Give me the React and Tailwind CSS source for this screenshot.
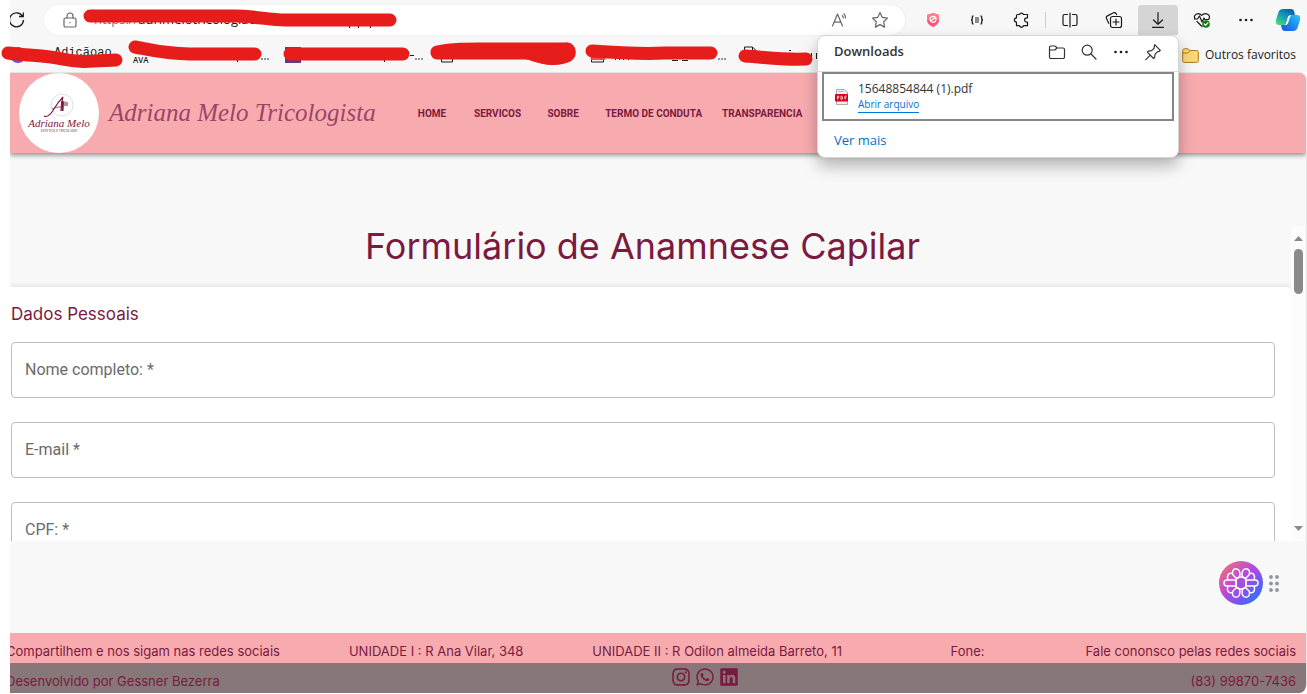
import React from 'react';
import { FaInstagram, FaWhatsapp, FaLinkedin } from 'react-icons/fa';

const NAV = ['HOME', 'SERVICOS', 'SOBRE', 'TERMO DE CONDUTA', 'TRANSPARENCIA'];
const FIELDS = [
  { id: 'nome', label: 'Nome completo: *', type: 'text' },
  { id: 'email', label: 'E-mail *', type: 'email' },
  { id: 'cpf', label: 'CPF: *', type: 'text' },
];

function Icon({ size = 18, view = '0 0 18 18', children, color = '#1b1b1b' }) {
  return (
    <svg width={size} height={size} viewBox={view} fill="none" stroke={color} strokeWidth="1.2" strokeLinecap="round" strokeLinejoin="round" aria-hidden="true">
      {children}
    </svg>
  );
}

function Dots() {
  return (
    <Icon>
      <g fill="#1b1b1b" stroke="none">
        <circle cx="3.5" cy="9" r="1.3" />
        <circle cx="9" cy="9" r="1.3" />
        <circle cx="14.5" cy="9" r="1.3" />
      </g>
    </Icon>
  );
}

function ToolButton({ label, children }) {
  return (
    <button type="button" aria-label={label} className="flex h-[30px] w-11 shrink-0 items-center justify-center">
      {children}
    </button>
  );
}

function DownloadsPanel() {
  return (
    <section aria-label="Downloads" className="absolute top-full -right-px z-20 w-[362px] rounded-lg border border-[#d5d5d5] bg-white shadow-[0_8px_16px_rgba(0,0,0,0.28)]">
      <header className="flex h-9 items-center border-b border-[#dcdcdc] px-4 pb-1">
        <h2 className="flex-1 text-[13px] font-semibold text-[#333]">Downloads</h2>
        <div className="flex items-center gap-3.5">
          <button type="button" aria-label="Abrir pasta">
            <Icon color="#333">
              <path d="M1.5 14V4.5A1.5 1.5 0 0 1 3 3h3.6c.5 0 .8.2 1.1.5L9 5h6a1.5 1.5 0 0 1 1.5 1.5V14a1.5 1.5 0 0 1-1.5 1.500H3A1.500 1.500 0 0 1 1.500 14ZM1.500 7h4.800c.500 0 .8-.2 1.100-.5L9 5" />
            </Icon>
          </button>
          <button type="button" aria-label="Pesquisar downloads">
            <Icon color="#333">
              <circle cx="7.200" cy="7.200" r="5" />
              <path d="m11 11 5 5" />
            </Icon>
          </button>
          <button type="button" aria-label="Mais opções"><Dots /></button>
          <button type="button" aria-label="Fixar">
            <Icon color="#333">
              <path d="m10.700 1.700 5.600 5.600-1.300 1.200-1.300.1-2.600 2.600-.5 3.300-1 1L3.300 9.200l1-1 3.300-.5 2.600-2.600.1-2.200ZM6.300 12.200l-4.500 4.500" />
            </Icon>
          </button>
        </div>
      </header>
      <div className="mx-1 flex h-[49px] items-center gap-2 border-2 border-[#868686] pl-2.5">
        <svg width="16" height="18" viewBox="0 0 16 18" aria-hidden="true">
          <path d="M2.500 1.500h8L13.500 4v12.500h-11Z" fill="#eee" stroke="#aaa" />
          <path d="M4 3.500h6" stroke="#bbb" />
          <rect x="1" y="6" width="13" height="7.500" rx="1" fill="#d9001b" />
          <path d="M3.500 11.500V8.200h1.200v1.700H3.500M7 11.500V8.200h.8c1 0 1 3.300 0 3.300ZM11 11.500V8.200h1.600M11 9.800h1.300" fill="none" stroke="#fff" strokeWidth=".8" />
        </svg>
        <div className="flex flex-col items-start">
          <span className="text-[12px] leading-4 text-[#333]">15648854844 (1).pdf</span>
          <a href="#abrir" className="border-b border-[#0078d4] text-[10px] leading-[15px] text-[#0072c9]">Abrir arquivo</a>
        </div>
      </div>
      <a href="#mais" className="block px-4 pt-0.5 text-[13px] leading-[34px] text-[#0072c9]">Ver mais</a>
    </section>
  );
}

function Toolbar() {
  return (
    <div className="flex h-[38px] items-center pt-[3px] pb-px">
      <button type="button" aria-label="Atualizar" className="flex h-[30px] w-[34px] shrink-0 items-center overflow-hidden">
        <svg width="17" height="20" viewBox="0 0 17 20" fill="none" stroke="#1b1b1b" strokeWidth="1.300" className="-ml-0.5" aria-hidden="true">
          <path d="M14.500 6.200A7 7 0 1 0 15.500 10M15.300 2.500v4h-4.300" />
        </svg>
      </button>
      <div className="flex h-[30px] min-w-0 flex-1 items-center rounded-full bg-white pr-4 pl-[18px] shadow-[0_0_2px_rgba(0,0,0,0.08)]">
        <Icon size={16} view="0 0 16 16" color="#666">
          <rect x="2" y="6" width="12" height="9" rx="1.500" />
          <path d="M5 6V4a3 3 0 0 1 6 0v2M8 10.300v.4" />
        </Icon>
        <p className="min-w-0 flex-1 truncate pl-4 text-[13px] text-[#777]">
          https://<span className="text-[#111]">adrimelotricologiaest</span>
        </p>
        <div className="flex items-center gap-[22px]">
          <button type="button" aria-label="Ler em voz alta">
            <Icon color="#666">
              <path d="M1.500 15 6.500 3l5 12M3.200 11.200h6.600M11.300 4.600c.7.7 1 1.500 1 2.400M13 2.800c1 1.200 1.500 2.600 1.500 4" />
            </Icon>
          </button>
          <button type="button" aria-label="Adicionar aos favoritos">
            <Icon color="#666">
              <path d="m9 1.500 2.300 4.900 5.200.7-3.800 3.700.9 5.300L9 13.600l-4.600 2.500.9-5.300L1.500 7.100l5.200-.7Z" />
            </Icon>
          </button>
        </div>
      </div>
      <div className="flex shrink-0 items-center pl-1.5">
        <ToolButton label="Bloqueador">
          <svg width="14" height="16" viewBox="0 0 14 16" aria-hidden="true">
            <path d="M7 1 13 3v5c0 3.500-3 5.700-6 7-3-1.300-6-3.500-6-7V3Z" fill="#f9557c" />
            <path d="M7 1 13 3v5l-6-1-6 1V3Z" fill="#ff7c8b" />
            <circle cx="7" cy="7.300" r="3" fill="none" stroke="#fff" strokeWidth="1.200" />
            <path d="m5 9 4-3.500" stroke="#fff" strokeWidth="1.200" />
          </svg>
        </ToolButton>
        <ToolButton label="Extensão">
          <svg width="14" height="12" viewBox="0 0 14 12" fill="none" stroke="#222" strokeWidth="1.300" aria-hidden="true">
            <path d="M3.500 2C2 2 2.300 3 2.300 4.300S2 6 1 6c1 0 1.300.4 1.300 1.700S2 10 3.500 10M10.500 2c1.500 0 1.200 1 1.200 2.300S12 6 13 6c-1 0-1.300.4-1.300 1.700s.3 2.300-1.200 2.300" />
            <path d="M5 4h4M5 6h4M5 8h4" strokeWidth="1" />
          </svg>
        </ToolButton>
        <ToolButton label="Extensões">
          <Icon>
            <path d="M5.500 3.500h2a2.100 2.100 0 0 1 4 0H15.500v3.300h-.7a2.200 2.200 0 0 0 0 4.400h.7v3.500h-4a2.100 2.100 0 0 1-4 0H4.500v-3.600a2.100 2.100 0 0 1 0-4.200V4.500a1 1 0 0 1 1-1Z" />
          </Icon>
        </ToolButton>
        <span className="mx-0.5 h-4 w-px bg-[#cfcfcf]" />
        <ToolButton label="Dividir tela">
          <Icon>
            <path d="M6.500 3.500h-3A1.500 1.500 0 0 0 2 5v8a1.500 1.500 0 0 0 1.500 1.500h3M11.500 3.500h3A1.500 1.500 0 0 1 16 5v8a1.500 1.500 0 0 1-1.500 1.500h-3M9 2v14" />
          </Icon>
        </ToolButton>
        <ToolButton label="Coleções">
          <Icon>
            <path d="M3.700 12.300 1.500 7.500a2 2 0 0 1 .9-2.600L8.500 1.800a2 2 0 0 1 2.600.8l.5 1" />
            <rect x="5.500" y="5.500" width="11" height="11" rx="2" />
            <path d="M11 8v6M8 11h6" />
          </Icon>
        </ToolButton>
        <div className="relative mx-0.5">
          <button type="button" aria-label="Downloads" className="flex h-[30px] w-10 items-center justify-center rounded-t-sm bg-[#d5d5d5]">
            <Icon>
              <path d="M9 1.500v11.500M4.500 9 9 13.300 13.500 9M3.500 16.300h11" />
            </Icon>
          </button>
          <DownloadsPanel />
        </div>
        <ToolButton label="Desempenho">
          <Icon>
            <path d="M2 8C-.2 4 5 .5 8.700 4.300 12.500.5 18.500 4 15.800 8M1.500 8h3l2-3 2.500 6 2-4 .8 1.500h4M4 10.500l5 5" />
            <circle cx="13" cy="13" r="3.800" fill="#107c10" stroke="none" />
            <path d="m11.300 13 1.300 1.300 2.300-2.500" stroke="#fff" />
          </Icon>
        </ToolButton>
        <ToolButton label="Configurações e mais"><Dots /></ToolButton>
        <button type="button" aria-label="Copilot" className="flex w-[39px] items-center justify-center">
          <svg width="26" height="26" viewBox="0 0 26 26" aria-hidden="true">
            <defs>
              <linearGradient id="cpA" x1="0" y1="1" x2=".7" y2="0">
                <stop offset="0" stopColor="#5fe36a" />
                <stop offset=".5" stopColor="#13a5b5" />
                <stop offset="1" stopColor="#0b5fae" />
              </linearGradient>
              <linearGradient id="cpB" x1="0" y1="1" x2="1" y2="0">
                <stop offset="0" stopColor="#1b4fe0" />
                <stop offset=".5" stopColor="#1a8df0" />
                <stop offset="1" stopColor="#30c5f5" />
              </linearGradient>
            </defs>
            <path d="M8 2h8c2 0 2.800 1 3.300 3l.7 3h-4c-2 0-2.700 1-3.300 3l-1.500 5c-.5 1.500-1.500 2-3 2H4c-3 0-3.500-2.500-3-5L3.500 5C4.300 3 5.700 2 8 2Z" fill="url(#cpA)" />
            <path d="M18 24h-8c-2 0-2.800-1-3.300-3L6 18h4c2 0 2.700-1 3.300-3l1.500-5c.5-1.500 1.500-2 3-2H22c3 0 3.500 2.500 3 5l-2.500 8c-.8 2-2.200 3-4.500 3Z" fill="url(#cpB)" />
            <path d="M13.500 9h2.300c-.8.500-1 1.200-1.300 2l-1.400 4.500c-.4 1.300-1 2-2 2.300H9.800c.9-.5 1.200-1.200 1.500-2.100l1.400-4.700c.2-.8.400-1.400.8-2Z" fill="#f7f7f7" />
          </svg>
        </button>
      </div>
    </div>
  );
}

function Bookmarks() {
  return (
    <div className="flex h-[34px] items-center text-[12px] text-[#1b1b1b]">
      <div className="flex min-w-0 flex-1 items-center overflow-hidden whitespace-nowrap">
        <a href="#b1" className="flex w-[123px] items-center gap-7">
          <span className="h-4 w-4 rounded-full bg-[#5b55f0]" />
          <span className="pb-1 font-['Liberation_Mono',monospace]">Adiçãoao</span>
        </a>
        <a href="#b2" className="w-[142px] pt-2.5 text-[8px] font-semibold">AVA</a>
        <a href="#b3" aria-label="Favorito" className="flex w-[130px] items-center pl-2.5">
          <span className="h-4 w-4 bg-[#5d3b86]" />
        </a>
      </div>
      <a href="#outros" className="flex shrink-0 items-center gap-1.5 pr-[11px]">
        <svg width="17" height="15" viewBox="0 0 17 15" aria-hidden="true">
          <path d="M.7 12.500v-10C.7 1.500 1.300.8 2.300.8h3.500c1 0 1.300 1.700 2.300 1.700h6.600c1 0 1.600.6 1.600 1.600v8.700c0 1-.6 1.600-1.600 1.600H2.300c-1 0-1.600-.6-1.600-1.900Z" fill="#ffd977" stroke="#a87a10" />
          <path d="M.7 5h5c1 0 1.500-2.500 2.500-2.500" fill="none" stroke="#a87a10" />
        </svg>
        Outros favoritos
      </a>
    </div>
  );
}

function Scribbles() {
  return (
    <svg width="820" height="72" viewBox="0 0 820 72" fill="none" stroke="#e71d1c" strokeLinecap="round" strokeLinejoin="round" className="pointer-events-none absolute top-0 left-0 z-10" aria-hidden="true">
      <g fill="#1b1b1b" stroke="none">
        <circle cx="262" cy="59" r=".8" /><circle cx="265" cy="59" r=".8" /><circle cx="268" cy="59" r=".8" />
        <circle cx="416" cy="59" r=".8" /><circle cx="419" cy="59" r=".8" /><circle cx="422" cy="59" r=".8" />
        <circle cx="719" cy="59" r=".8" /><circle cx="722" cy="59" r=".8" /><circle cx="725" cy="59" r=".8" />
        <path d="M410 55h4v1h-4ZM237 58h1v4h-1ZM384 58h1v4h-1ZM672 60h6v1h-6ZM682 60h6v1h-6ZM349 24h1v4h-1ZM358 24h1v4h-1ZM370 25h1v3h-1ZM789 50h2v1h-2ZM811 53h1v4h-1ZM816 53h1v6h-1Z" />
        <path d="M615 59h1v1h-1ZM619 59h1v1h-1ZM623 59h1v1h-1ZM628 59h1v1h-1Z" />
      </g>
      <path d="M441.500 54v8h11v-8M591.500 54v8h12v-8M744.500 55v-8h8l4 4M752.500 47v4h4" stroke="#1b1b1b" strokeLinecap="butt" />
      <path d="M592 58.500h12" stroke="#f04a4a" strokeWidth="3" />
      <path d="M90 16H235C255 16 268 20 285 20H390" strokeWidth="13" />
      <path d="M8 53C30 56 44 55 62 59S95 61 116 60" strokeWidth="13" />
      <path d="M135 47C151 50 165 54 190 54H255" strokeWidth="13" />
      <path d="M290 54H403" strokeWidth="13" />
      <path d="M437 52C455 48 475 49 500 49H566C576 56 560 59 551 58C538 58 535 53 525 53H437" strokeWidth="13" />
      <path d="M567 51C558 60 545 56 535 53" strokeWidth="17" />
      <path d="M592 51C620 53 645 54 665 53H711" strokeWidth="13" />
      <path d="M745 56C765 57 780 60 806 59" strokeWidth="13" />
    </svg>
  );
}

function Logo() {
  return (
    <div className="flex h-20 w-20 shrink-0 flex-col items-center rounded-full bg-white pt-5 text-[#7b1a40]">
      <svg width="32" height="26" viewBox="0 0 32 26" fill="none" aria-hidden="true">
        <circle cx="19" cy="12" r="11" stroke="#e3dfe1" />
        <path d="M1 23c4 2 7-2 10-7S18 6 20 4c-1 3-2 7-2 14" stroke="#7b1a40" strokeWidth="1.100" />
        <path d="M9 16c4-2 6-2 9-2" stroke="#7b1a40" strokeWidth=".7" />
        <path d="M18 9c1-2 2-2 3 0l-.5 9h-2ZM21.500 8.500h1V13h-1ZM23.500 9h1v4h-1Z" fill="#7b1a40" />
      </svg>
      <span className="-mt-0.5 font-['Liberation_Serif',serif] text-[11px] leading-3 whitespace-nowrap italic">Adriana Melo</span>
      <span className="text-[3px] leading-[5px] whitespace-nowrap">ESTETICA E TRICOLOGIA</span>
    </div>
  );
}

function AssistantWidget() {
  return (
    <div className="absolute right-[27px] bottom-[28px] flex items-center gap-[6px]">
      <button type="button" aria-label="Assistente" className="flex h-11 w-11 items-center justify-center rounded-full bg-[linear-gradient(135deg,#f5746f_5%,#b549dc_45%,#8f50ea_60%,#2673fa_90%)]">
        <svg width="36" height="32" viewBox="-18 -16 36 32" fill="none" stroke="#fff" strokeWidth="1.500" strokeLinejoin="round" aria-hidden="true">
          <path d="M-1.500-6C0-11-2-14.300-5-14.300S-9.500-11-8-8L-4.500-4.500ZM1.500-6C0-11 2-14.300 5-14.300S9.500-11 8-8L4.500-4.500ZM-1.500 6C0 11-2 14.300-5 14.300S-9.500 11-8 8L-4.500 4.500ZM1.500 6C0 11 2 14.300 5 14.300S9.500 11 8 8L4.500 4.500Z" />
          <path d="M-5-3H-14a3 3 0 0 0 0 6H-5ZM5-3H14a3 3 0 0 1 0 6H5ZM-9-9.500c-4-.8-5.500 2.500-4 6.500M9-9.500c4-.8 5.500 2.500 4 6.500M-9 9.500c-4 .8-5.500-2.500-4-6.500M9 9.500c4 .8 5.500-2.500 4-6.500" />
          <path d="M-4.500-4.500-1.500-6h3l3 1.500L5 0l-.5 4.500L1.500 6h-3l-3-1.500L-5 0Z" />
        </svg>
      </button>
      <svg width="10" height="17" viewBox="0 0 10 17" fill="#8d96a5" aria-hidden="true">
        <circle cx="2" cy="2" r="1.900" /><circle cx="8" cy="2" r="1.900" />
        <circle cx="2" cy="8.500" r="1.900" /><circle cx="8" cy="8.500" r="1.900" />
        <circle cx="2" cy="15" r="1.900" /><circle cx="8" cy="15" r="1.900" />
      </svg>
    </div>
  );
}

function Scrollbar() {
  return (
    <div className="mr-px flex w-3.5 shrink-0 flex-col items-center bg-[#fcfcfc] pt-2.5 pb-2.5" aria-hidden="true">
      <svg width="9" height="5" viewBox="0 0 9 5"><path d="M0 5 4.500 0 9 5Z" fill="#8a8a8a" /></svg>
      <span className="mt-2 h-[45px] w-[9px] rounded-full bg-[#8a8a8a]" />
      <svg width="9" height="5" viewBox="0 0 9 5" className="mt-auto"><path d="M0 0 4.500 5 9 0Z" fill="#8a8a8a" /></svg>
    </div>
  );
}

export default function App() {
  return (
    <div className="relative flex h-screen flex-col overflow-hidden bg-white pb-px pl-2.5 font-['Inter',sans-serif]">
      <div className="shrink-0 bg-[#f7f7f7] font-['Open_Sans','Noto_Sans',sans-serif]">
        <Toolbar />
        <Bookmarks />
      </div>
      <Scribbles />

      <div className="flex min-h-0 flex-1 flex-col overflow-hidden rounded-tr-lg rounded-br-lg border-t border-r border-[#e4e4e4] bg-[#f8f8f8]">
        <header className="z-[1] flex h-20 shrink-0 items-center bg-[#f7abaf] pl-[9px] shadow-[0_2px_5px_rgba(0,0,0,0.45)]">
          <Logo />
          <span className="ml-2.5 w-[291px] font-['Liberation_Serif',serif] text-[25px] leading-8 whitespace-nowrap text-[#9c4468] italic">Adriana Melo Tricologista</span>
          <nav className="flex font-['Roboto',sans-serif] text-[10px] font-bold text-[#7b1a40]">
            {NAV.map((item) => (
              <a key={item} href="#nav" className="flex min-w-16 items-center justify-center px-2.5 py-2 whitespace-nowrap">{item}</a>
            ))}
          </nav>
        </header>

        <main className="relative flex min-h-0 flex-1 flex-col pt-[73px] pb-[92px]">
          <div className="flex min-h-0 flex-1">
            <div className="flex min-w-0 flex-1 flex-col overflow-hidden">
              <h1 className="h-[61px] shrink-0 pr-4 text-center text-[36px] leading-10 font-normal text-[#7b1a40]">Formulário de Anamnese Capilar</h1>
              <form className="flex shrink-0 flex-col rounded-tr bg-white pt-[15px] pr-4 pl-px shadow-[0_0_6px_rgba(0,0,0,0.14)]">
                <h2 className="text-[17px] leading-6 text-[#7b1a40]">Dados Pessoais</h2>
                <div className="flex flex-col gap-6 pt-4 font-['Roboto',sans-serif] text-[16px] text-[#6b6b6b]">
                  {FIELDS.map((f) => (
                    <div key={f.id} className="flex h-14 items-center rounded border border-[#bdbdbd] px-[13px]">
                      <label htmlFor={f.id}>{f.label}</label>
                      <input id={f.id} type={f.type} className="h-full min-w-0 flex-1 bg-transparent pl-2 outline-none" />
                    </div>
                  ))}
                </div>
              </form>
            </div>
            <Scrollbar />
          </div>
          <AssistantWidget />
        </main>

        <footer className="shrink-0 overflow-hidden text-[13px] text-[#7b1a40]">
          <div className="-ml-1 flex h-[30px] items-center justify-between bg-[#f7abaf] pt-2 pr-2.5 whitespace-nowrap">
            <div className="flex gap-[69px]">
              <span>Compartilhem e nos sigam nas redes sociais</span>
              <span>UNIDADE I : R Ana Vilar, 348</span>
              <span>UNIDADE II : R Odilon almeida Barreto, 11</span>
            </div>
            <div className="flex gap-[101px]">
              <span>Fone:</span>
              <span>Fale cononsco pelas redes sociais</span>
            </div>
          </div>
          <div className="-ml-1 flex h-[30px] items-center justify-between bg-[#877778] pr-2.5">
            <span className="pt-2">Desenvolvido por Gessner Bezerra</span>
            <div className="flex gap-1 pb-0.5">
              <a href="#instagram" aria-label="Instagram"><FaInstagram size={20} /></a>
              <a href="#whatsapp" aria-label="WhatsApp"><FaWhatsapp size={20} /></a>
              <a href="#linkedin" aria-label="LinkedIn"><FaLinkedin size={20} /></a>
            </div>
            <span className="pt-2 text-right">(83) 99870-7436</span>
          </div>
        </footer>
      </div>
    </div>
  );
}
